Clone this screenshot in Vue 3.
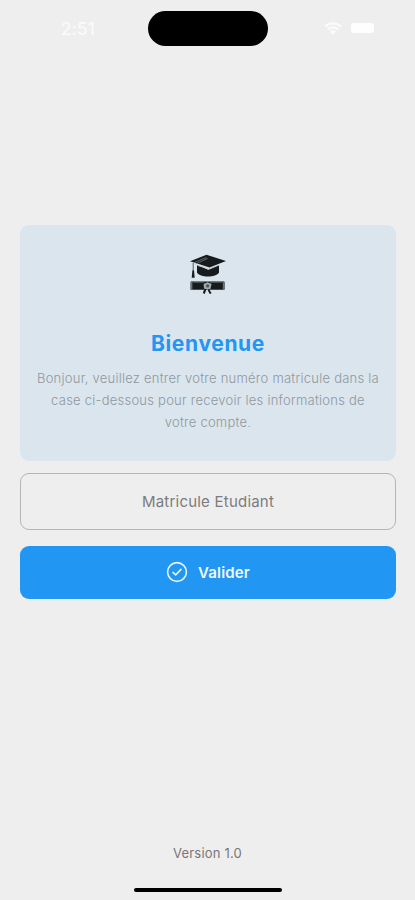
<script setup>
import { ref } from 'vue'

const matricule = ref('')
const message = [
  'Bonjour, veuillez entrer votre numéro matricule dans la',
  'case ci-dessous pour recevoir les informations de',
  'votre compte.'
]
</script>

<template>
  <div class="screen">
    <header class="status">
      <span class="time">2:51</span>
      <span class="island"></span>
      <span class="indicators">
        <svg class="wifi" viewBox="0 0 18 13">
          <path d="M1 4.6a11.7 11.7 0 0 1 16 0M3.8 7.5a7.6 7.6 0 0 1 10.4 0" />
          <path class="dot" d="M6 9.5a4.4 4.4 0 0 1 6 0L9 12.7z" />
        </svg>
        <span class="battery"></span>
      </span>
    </header>

    <main class="content">
      <section class="card">
        <svg class="graduation" viewBox="0 0 40 44">
          <path class="ink" d="M9 13 20 17.5 31 13V20.5C28 25.8 12 25.8 9 20.5V13z" />
          <path class="ink" d="M2 9.2 18.5 2.8 38 9.1 21.5 15.4 12.2 12.4z" />
          <path class="light" d="M5.2 11 17.5 5.8 19.3 6.6 7.5 12" />
          <path class="seam" d="M9.5 13.4 15 15 20.5 17.4 31 13" />
          <path class="tassel" d="M5.2 11V18" />
          <path class="ink" d="M4.4 18.2h1.6l.7 7.5H3.7z" />
          <path class="ink" d="M3 29.6h33v8.2H3z" />
          <path class="roll" d="M2.2 29.7h2.2v8H2.2zM34.8 29.7H37v8h-2.2z" />
          <path class="edge" d="M5.2 30.4h11M22 30.4h12" />
          <path class="bow" d="M15.6 32 19.5 30.2 23.6 32 22.5 36.8 19.3 37.8 16 36.6z" />
          <path class="ink" d="m18.6 37-1.9 5-1.9-1 1.5-4zM21.1 37l2.5 4.2-1.9.9-2.1-4z" />
          <circle class="seal" cx="19.6" cy="33.9" r="1.6" />
        </svg>
        <h1 class="title">Bienvenue</h1>
        <p class="message">
          <span v-for="(line, i) in message" :key="i" class="line">{{ line }}</span>
        </p>
      </section>

      <input v-model="matricule" class="field" type="text" placeholder="Matricule Etudiant" />

      <button class="submit" type="button">
        <svg class="check" viewBox="0 0 22 22">
          <circle cx="11" cy="11" r="9.4" />
          <path d="m7 11.3 2.7 2.6 5.3-5.5" />
        </svg>
        <span>Valider</span>
      </button>
    </main>

    <footer class="footer">
      <span class="version">Version 1.0</span>
      <span class="home"></span>
    </footer>
  </div>
</template>

<style>
body {
  background: #eeeeee;
}
</style>

<style scoped>
.screen {
  box-sizing: border-box;
  width: 415px;
  height: 900px;
  display: flex;
  flex-direction: column;
  background: #eeeeee;
  font-family: Inter, "Liberation Sans", sans-serif;
  overflow: hidden;
}
.status {
  height: 35px;
  padding-top: 11px;
  display: grid;
  grid-template-columns: 148px 120px 1fr;
  align-items: center;
}
.time {
  padding-left: 61px;
  color: #fafafa;
  font-size: 17px;
  font-weight: 500;
  line-height: 20px;
  letter-spacing: 0.2px;
}
.island {
  height: 35px;
  border-radius: 18px;
  background: #000;
}
.indicators {
  display: flex;
  align-items: center;
  gap: 9px;
  padding: 0 0 1px 56px;
}
.wifi {
  width: 18px;
  height: 13px;
  fill: none;
  stroke: #fbfbfb;
  stroke-width: 2.2;
}
.wifi .dot {
  fill: #fbfbfb;
  stroke: none;
}
.battery {
  width: 23px;
  height: 10px;
  border-radius: 3px;
  background: #fefefe;
}
.content {
  margin: 179px 19px 0 20px;
  display: flex;
  flex-direction: column;
}
.card {
  box-sizing: border-box;
  height: 236px;
  padding-top: 27px;
  border-radius: 9px;
  background: #dbe5ed;
  display: flex;
  flex-direction: column;
  align-items: center;
}
.graduation {
  width: 40px;
  height: 44px;
}
.ink {
  fill: #171b1d;
}
.light {
  fill: none;
  stroke: #8b9499;
  stroke-width: 0.6;
}
.seam {
  fill: none;
  stroke: #c3ccd2;
  stroke-width: 1;
}
.tassel {
  fill: none;
  stroke: #343a3e;
  stroke-width: 0.8;
}
.roll {
  fill: #68737a;
}
.edge {
  fill: none;
  stroke: #65716c;
  stroke-width: 0.7;
}
.bow {
  fill: #a0aaae;
}
.seal {
  fill: #4c5558;
}
.title {
  margin: 33px 0 0;
  color: #2196f3;
  font-size: 21px;
  line-height: 29px;
  font-weight: 700;
  font-optical-sizing: none;
  letter-spacing: 0.65px;
}
.message {
  margin: 9px 0 0;
  color: #8f989f;
  font-size: 13px;
  font-weight: 300;
  line-height: 22px;
  letter-spacing: 0.24px;
  text-align: center;
}
.line {
  display: block;
  white-space: nowrap;
}
.field {
  box-sizing: border-box;
  width: 100%;
  height: 57px;
  margin: 12px 0 0;
  padding: 0 16px 1px;
  border: 1px solid #b5b5b5;
  border-radius: 9px;
  outline: none;
  background: transparent;
  color: #333;
  font-family: inherit;
  font-size: 15px;
  letter-spacing: 0.22px;
  text-align: center;
}
.field::placeholder {
  color: #7c7c7c;
  opacity: 1;
}
.submit {
  height: 53px;
  margin: 16px 0 0;
  padding: 0 0 1px;
  border: 0;
  border-radius: 9px;
  background: #2196f3;
  color: #f1f8ff;
  display: flex;
  align-items: center;
  justify-content: center;
  gap: 10px;
  font-family: inherit;
  font-size: 15px;
  font-weight: 600;
  letter-spacing: 0.15px;
}
.check {
  width: 22px;
  height: 22px;
  fill: none;
  stroke: #e4f3ff;
  stroke-width: 1.6;
  stroke-linecap: round;
  stroke-linejoin: round;
}
.footer {
  margin-top: auto;
  padding-bottom: 8px;
  display: flex;
  flex-direction: column;
  align-items: center;
  gap: 26px;
}
.version {
  color: #777;
  font-size: 13px;
  line-height: 18px;
  letter-spacing: 0.2px;
}
.home {
  width: 148px;
  height: 4px;
  border-radius: 2px;
  background: #000;
}
</style>
